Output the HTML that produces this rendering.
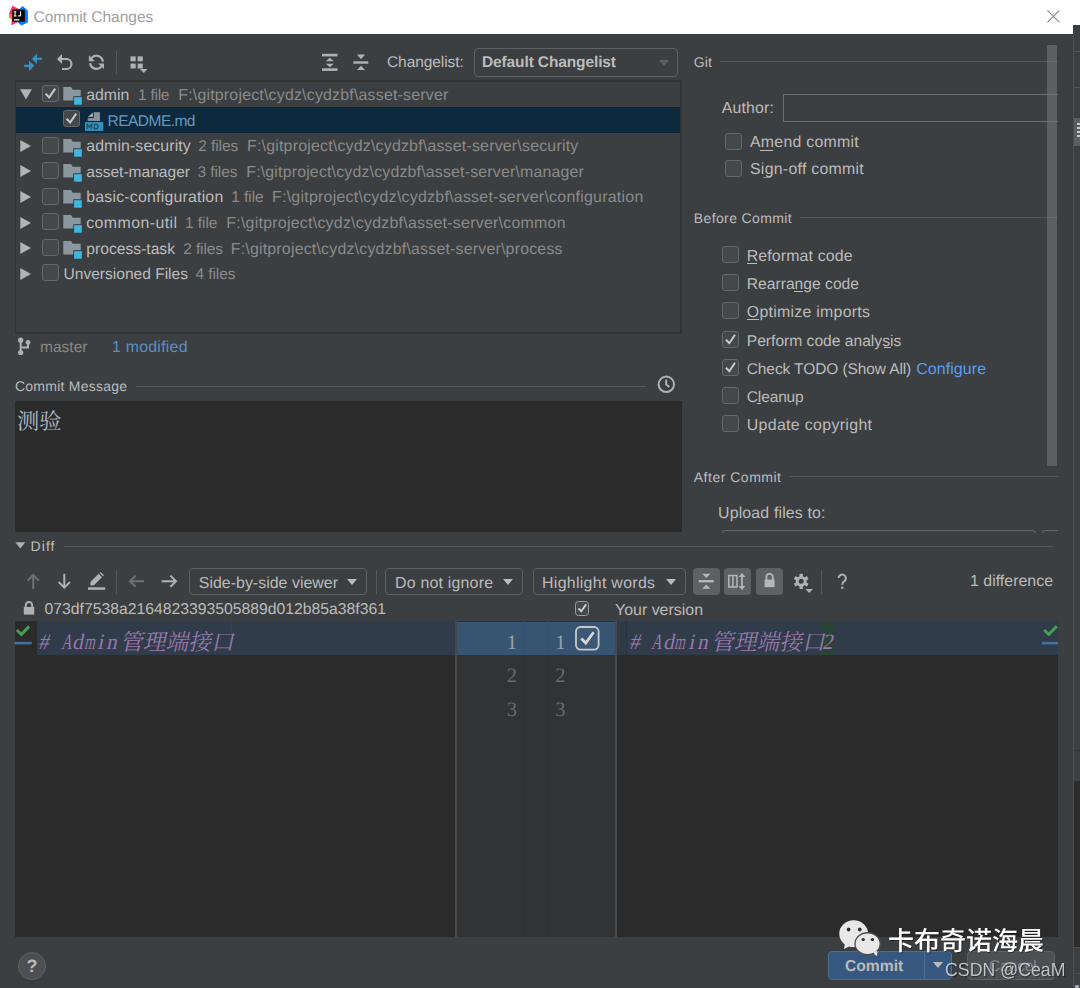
<!DOCTYPE html>
<html lang="en">
<head>
<meta charset="utf-8">
<title>Commit Changes</title>
<style>
*{box-sizing:border-box;margin:0;padding:0}
html,body{width:1080px;height:988px;overflow:hidden;background:#3c3f41}
body{position:relative;font-family:"Liberation Sans",sans-serif;font-size:15.5px;color:#bbb;text-rendering:geometricPrecision}
.abs,.t,.box,.cb,.ln,.combo,.btn{position:absolute}
.t{white-space:pre;line-height:normal}
svg{overflow:visible;display:block}
.ln{background:#535557;height:1px}
.vl{position:absolute;width:1px;background:#555759}
.cb{width:17px;height:17px;border:1px solid #65686a;border-radius:3px;background:#43494a}
.cb svg{position:absolute;left:-1px;top:-1px}
.combo{border:1px solid #5f6264;border-radius:4px;background:#3c3f41}
.tri{position:absolute;width:0;height:0;border-left:5px solid transparent;border-right:5px solid transparent;border-top:6px solid #bbb}
.tog{position:absolute;width:26.5px;height:26.5px;border-radius:4px;background:#5c6164;top:568px}
.u{position:absolute;height:1.3px;background:#bbb}
</style>
</head>
<body>
<!-- ===== window title bar ===== -->
<div class="abs" id="titlebar" style="left:0;top:0;width:1073px;height:34px;background:#fff"></div>
<div class="abs" style="left:1073px;top:0;width:7px;height:25px;background:#fff"></div>
<div class="abs" style="left:1073px;top:25px;width:7px;height:963px;background:#3c3f41"></div>
<div class="abs" style="left:1073px;top:34px;width:1px;height:954px;background:#4b4d4f"></div>
<div class="abs" style="left:1074px;top:51px;width:6px;height:1px;background:#555"></div>
<div class="abs" style="left:1074px;top:87px;width:6px;height:1px;background:#555"></div>
<div class="abs" style="left:1074px;top:118px;width:6px;height:28px;background:#5b5e60"></div>
<div class="abs" style="left:1077px;top:123px;width:3px;height:2px;background:#c8c8c8"></div>
<div class="abs" style="left:1077px;top:127px;width:3px;height:2px;background:#c8c8c8"></div>
<div class="abs" style="left:1077px;top:131px;width:3px;height:2px;background:#c8c8c8"></div>
<div class="abs" style="left:1077px;top:135px;width:3px;height:2px;background:#c8c8c8"></div>
<div class="abs" style="left:1074px;top:750px;width:6px;height:1px;background:#333"></div>
<div class="abs" style="left:1074px;top:781px;width:6px;height:166px;background:#2b2b2b"></div>
<div class="abs" style="left:1074px;top:947px;width:6px;height:1px;background:#4d4f51"></div>
<div class="abs" style="left:1074px;top:973px;width:6px;height:1px;background:#4a4c4e"></div>
<div class="abs" style="left:1075px;top:985px;width:4px;height:3px;background:#9fa6b8"></div>
<!-- IntelliJ logo -->
<svg class="abs" id="logo" style="left:8px;top:5px" width="21" height="21" viewBox="0 0 21 21">
  <polygon points="4.3,0.8 11.5,4.2 9.8,17.200 3.200,20.300 4,13 1,8.600" fill="#f93263"/>
  <polygon points="0.900,9.500 4.400,9.600 4.400,14.600 1.100,12.900" fill="#fc801d"/>
  <polygon points="14.500,0.900 19.900,5.400 19.900,17.500 13.250,20.500 9.800,17.200 11,4.300" fill="#087cfa"/>
  <rect x="4.300" y="4.600" width="12.500" height="12.100" fill="#000"/>
  <rect x="6" y="14.200" width="5.400" height="1.300" fill="#fff"/>
  <path d="M5.700 6.300h2.700v1H7.600v3.200h.8v1H5.700v-1h.8V7.300h-.8z" fill="#fff"/>
  <path d="M11.900 6.300h1.200v3.600c0 1.100-.6 1.700-1.600 1.700-.7 0-1.200-.3-1.500-.7l.7-.8c.2.300.4.400.7.400.4 0 .5-.2.500-.7z" fill="#fff"/>
</svg>
<!-- close X -->
<svg class="abs" style="left:1046.5px;top:9.5px" width="13" height="13" viewBox="0 0 13 13"><path d="M0.4 0.4L12.4 12.400M12.400 0.400L0.400 12.400" stroke="#8a8a8a" stroke-width="1.150" fill="none"/></svg>

<!-- ===== top toolbar ===== -->
<svg class="abs" id="ic-diff" style="left:23px;top:52px" width="20" height="20" viewBox="0 0 20 20" fill="#3592c4">
  <path d="M9 6.75L14 1.6V5.7H19V7.8H14V11.9z"/>
  <path d="M11.5 13.8L6 8.8V12.7H1.2V14.9H6V18.9z"/>
</svg>
<svg class="abs" id="ic-undo" style="left:56px;top:53px" width="18" height="18" viewBox="0 0 18 18">
  <path d="M1 6L6 1V11z" fill="#afb1b3"/>
  <path d="M5.5 6H10.5A5 5 0 0 1 10.5 16H6" fill="none" stroke="#afb1b3" stroke-width="2.1"/>
</svg>
<svg class="abs" id="ic-refresh" style="left:88px;top:54px" width="17" height="17" viewBox="0 0 17 17">
  <path d="M3.5 4.2A6.3 6.3 0 0 1 14.8 7.6" fill="none" stroke="#afb1b3" stroke-width="2.2"/>
  <path d="M2.2 9.2A6.3 6.3 0 0 0 13.5 12.4" fill="none" stroke="#afb1b3" stroke-width="2.2"/>
  <path d="M0.9 1.2V7.3H6.8z" fill="#afb1b3"/>
  <path d="M16 9.5V15.1L10.1 9.5z" fill="#afb1b3"/>
</svg>
<div class="vl" style="left:116px;top:51px;height:23px"></div>
<svg class="abs" id="ic-group" style="left:130px;top:56px" width="18" height="18" viewBox="0 0 18 18" fill="#afb1b3">
  <rect x="0.5" y="0.4" width="5.2" height="4.9"/><rect x="7.6" y="0.4" width="5.2" height="4.9"/>
  <rect x="0.5" y="7.6" width="5.2" height="4.9"/><rect x="7.6" y="7.6" width="5.2" height="4.9"/>
  <path d="M10 13H17.5L13.75 17z"/>
</svg>
<svg class="abs" id="ic-expand" style="left:322px;top:53px" width="16" height="19" viewBox="0 0 16 19" fill="#afb1b3">
  <rect x="0" y="0.8" width="15.5" height="2.6"/><rect x="0" y="15.3" width="15.5" height="2.6"/>
  <path d="M3.8 8.3H11.8L7.8 4.8z"/><path d="M3.8 10.8H11.8L7.8 14.3z"/>
</svg>
<svg class="abs" id="ic-collapse" style="left:353px;top:54px" width="16" height="17" viewBox="0 0 16 17" fill="#afb1b3">
  <rect x="0.3" y="7.3" width="15" height="2.4"/>
  <path d="M4 0.6H12L8 5.2z"/><path d="M4 16H12L8 11.8z"/>
</svg>
<div class="combo" style="left:474px;top:48px;width:204px;height:29px"></div>
<div class="tri" style="left:659px;top:60px;border-top-color:#5c5f61"></div>

<!-- ===== changes tree ===== -->
<div class="box" id="tree" style="left:15px;top:80px;width:667px;height:254px;border:1px solid #323232;border-top-width:2px;border-right-width:2px;border-bottom-width:2px"></div>
<div class="box" id="selrow" style="left:16px;top:107px;width:664px;height:25.5px;background:#0d293e"></div>
<svg class="abs" style="left:19.5px;top:89.20px" width="13" height="11" viewBox="0 0 13 11"><path d="M0.1 0.2H11.9L6 10.4z" fill="#b1b3b5"/></svg>
<div class="cb" style="left:42px;top:85.00px"><svg width="17" height="17" viewBox="0 0 17 17"><path d="M3.6 8.8L7.2 12.4L13.2 3.6" fill="none" stroke="#c8c8c8" stroke-width="2"/></svg></div>
<svg class="abs" style="left:63.20px;top:87.20px" width="20" height="18" viewBox="0 0 20 18"><path d="M0.3 0H8.2L9.6 2.8H17.7V13.4H0.3z" fill="#8a979f"/><rect x="10.2" y="9.2" width="9.6" height="9" fill="#3c3f41"/><rect x="11.1" y="10.2" width="7.7" height="7.5" fill="#40b6e0"/></svg>
<div class="cb" style="left:63px;top:110.45px"><svg width="17" height="17" viewBox="0 0 17 17"><path d="M3.6 8.8L7.2 12.4L13.2 3.6" fill="none" stroke="#c8c8c8" stroke-width="2"/></svg></div>
<svg class="abs" style="left:85px;top:112px" width="19" height="20" viewBox="0 0 19 20"><rect x="8.8" y="0.2" width="6.1" height="8.7" fill="#87939a"/><rect x="2.7" y="6.1" width="12.2" height="2.8" fill="#87939a"/><path d="M2.7 4.9H8V0.6z" fill="#9aa7b0"/><rect x="0" y="10" width="18.3" height="8.9" fill="#3490b8"/><path d="M2.1 17V12.3L4.4 15.2L6.700 12.300V17M9.400 12.300V16.900H10.800A2.300 2.300 0 0 0 10.800 12.300z" fill="none" stroke="#1e4d65" stroke-width="1.250"/></svg>
<svg class="abs" style="left:20px;top:139.90px" width="12" height="13" viewBox="0 0 12 13"><path d="M0.3 0.1V11.9L11 6z" fill="#b1b3b5"/></svg>
<div class="cb" style="left:42px;top:136.60px"></div>
<svg class="abs" style="left:63.20px;top:138.80px" width="20" height="18" viewBox="0 0 20 18"><path d="M0.3 0H8.2L9.6 2.8H17.7V13.4H0.3z" fill="#8a979f"/><rect x="10.2" y="9.2" width="9.6" height="9" fill="#3c3f41"/><rect x="11.1" y="10.2" width="7.7" height="7.5" fill="#40b6e0"/></svg>
<svg class="abs" style="left:20px;top:165.45px" width="12" height="13" viewBox="0 0 12 13"><path d="M0.3 0.1V11.9L11 6z" fill="#b1b3b5"/></svg>
<div class="cb" style="left:42px;top:162.15px"></div>
<svg class="abs" style="left:63.20px;top:164.35px" width="20" height="18" viewBox="0 0 20 18"><path d="M0.3 0H8.2L9.6 2.8H17.7V13.4H0.3z" fill="#8a979f"/><rect x="10.2" y="9.2" width="9.6" height="9" fill="#3c3f41"/><rect x="11.1" y="10.2" width="7.7" height="7.5" fill="#40b6e0"/></svg>
<svg class="abs" style="left:20px;top:191.00px" width="12" height="13" viewBox="0 0 12 13"><path d="M0.3 0.1V11.9L11 6z" fill="#b1b3b5"/></svg>
<div class="cb" style="left:42px;top:187.70px"></div>
<svg class="abs" style="left:63.20px;top:189.90px" width="20" height="18" viewBox="0 0 20 18"><path d="M0.3 0H8.2L9.6 2.8H17.7V13.4H0.3z" fill="#8a979f"/><rect x="10.2" y="9.2" width="9.6" height="9" fill="#3c3f41"/><rect x="11.1" y="10.2" width="7.7" height="7.5" fill="#40b6e0"/></svg>
<svg class="abs" style="left:20px;top:216.55px" width="12" height="13" viewBox="0 0 12 13"><path d="M0.3 0.1V11.9L11 6z" fill="#b1b3b5"/></svg>
<div class="cb" style="left:42px;top:213.25px"></div>
<svg class="abs" style="left:63.20px;top:215.45px" width="20" height="18" viewBox="0 0 20 18"><path d="M0.3 0H8.2L9.6 2.8H17.7V13.4H0.3z" fill="#8a979f"/><rect x="10.2" y="9.2" width="9.6" height="9" fill="#3c3f41"/><rect x="11.1" y="10.2" width="7.7" height="7.5" fill="#40b6e0"/></svg>
<svg class="abs" style="left:20px;top:242.10px" width="12" height="13" viewBox="0 0 12 13"><path d="M0.3 0.1V11.9L11 6z" fill="#b1b3b5"/></svg>
<div class="cb" style="left:42px;top:238.80px"></div>
<svg class="abs" style="left:63.20px;top:241.00px" width="20" height="18" viewBox="0 0 20 18"><path d="M0.3 0H8.2L9.6 2.8H17.7V13.4H0.3z" fill="#8a979f"/><rect x="10.2" y="9.2" width="9.6" height="9" fill="#3c3f41"/><rect x="11.1" y="10.2" width="7.7" height="7.5" fill="#40b6e0"/></svg>
<svg class="abs" style="left:20px;top:267.65px" width="12" height="13" viewBox="0 0 12 13"><path d="M0.3 0.1V11.9L11 6z" fill="#b1b3b5"/></svg>
<div class="cb" style="left:42px;top:264.35px"></div>

<!-- status -->
<svg class="abs" id="ic-branch" style="left:17px;top:337px" width="15" height="19" viewBox="0 0 15 19">
  <path d="M3.7 3.2V15.5M3.7 10.5H11V5.5" fill="none" stroke="#afb1b3" stroke-width="2"/>
  <circle cx="3.7" cy="3.2" r="2.6" fill="#afb1b3"/><circle cx="3.7" cy="15.5" r="2.6" fill="#afb1b3"/><circle cx="11" cy="5.5" r="2.4" fill="#afb1b3"/>
</svg>

<!-- commit message -->
<div class="ln" style="left:136px;top:386px;width:510px"></div>
<svg class="abs" id="ic-clock" style="left:657px;top:375px" width="19" height="19" viewBox="0 0 19 19"><circle cx="9.3" cy="9.3" r="7.7" fill="none" stroke="#afb1b3" stroke-width="2"/><path d="M9.2 4.5V9.6L12.4 12" fill="none" stroke="#afb1b3" stroke-width="2"/></svg>
<div class="box" id="msg" style="left:15px;top:401px;width:667px;height:131px;background:#2b2b2b"></div>
<svg class="abs " style="left:10.60px;top:401.90px;" width="56.6" height="42.1" viewBox="-6 -27.5 56.6 42.1" fill="#a9b7c6"><text x="0" y="0" font-size="22.3" font-family="'Liberation Serif','Noto Serif CJK SC',serif" fill="#a9b7c6">测验</text></svg>

<!-- ===== right options panel ===== -->
<div class="ln" style="left:720px;top:61px;width:338px"></div>
<div class="box" id="author" style="left:783px;top:94px;width:290px;height:28px;border:1px solid #6c6e70;border-right:none;background:#3c3f41"></div>
<div class="cb" style="left:725px;top:133px"></div>
<div class="cb" style="left:725px;top:160px"></div>
<div class="u" style="left:760px;top:149.5px;width:13px"></div>
<div class="u" style="left:763px;top:177px;width:8px;background:#888"></div>
<div class="ln" style="left:800px;top:217px;width:258px"></div>
<div class="cb" style="left:722px;top:246.20px"></div>
<div class="cb" style="left:722px;top:274.32px"></div>
<div class="cb" style="left:722px;top:302.44px"></div>
<div class="cb" style="left:722px;top:330.56px"><svg width="17" height="17" viewBox="0 0 17 17"><path d="M4 8.7L7.3 12.2L13 3.8" fill="none" stroke="#c8c8c8" stroke-width="2"/></svg></div>
<div class="cb" style="left:722px;top:358.68px"><svg width="17" height="17" viewBox="0 0 17 17"><path d="M4 8.7L7.3 12.2L13 3.8" fill="none" stroke="#c8c8c8" stroke-width="2"/></svg></div>
<div class="cb" style="left:722px;top:386.80px"></div>
<div class="cb" style="left:722px;top:414.92px"></div>
<div class="u" style="left:747px;top:262.6px;width:10px"></div>
<div class="u" style="left:794px;top:290.7px;width:9px"></div>
<div class="u" style="left:747px;top:318.8px;width:12px"></div>
<div class="u" style="left:884px;top:346.9px;width:7px"></div>
<div class="u" style="left:757px;top:403.1px;width:4px"></div>
<div class="ln" style="left:789px;top:476px;width:269px"></div>
<div class="box" style="left:722px;top:530px;width:314px;height:10px;border:1px solid #646667;border-bottom:none;border-radius:4px 4px 0 0"></div>
<div class="box" style="left:1042px;top:530px;width:24px;height:10px;border:1px solid #646667;border-bottom:none;border-radius:4px 4px 0 0"></div>
<div class="box" style="left:690px;top:533px;width:383px;height:10px;background:#3c3f41"></div>
<div class="box" style="left:1058px;top:40px;width:15px;height:500px;background:#3c3f41"></div>
<div class="box" id="scroll" style="left:1047px;top:45px;width:10px;height:421px;background:rgba(120,120,122,0.55)"></div>

<!-- ===== diff section ===== -->
<svg class="abs" style="left:15px;top:542px" width="11" height="8" viewBox="0 0 11 8"><path d="M0.3 0.3H10.3L5.3 6.6z" fill="#afb1b3"/></svg>
<div class="ln" style="left:64px;top:546px;width:989px"></div>
<svg class="abs" id="ic-up" style="left:26px;top:573px" width="14" height="17" viewBox="0 0 14 17"><path d="M7.2 16V2M1.6 7.6L7.2 2L12.8 7.6" fill="none" stroke="#6e7072" stroke-width="2"/></svg>
<svg class="abs" id="ic-down" style="left:57px;top:573px" width="14" height="17" viewBox="0 0 14 17"><path d="M7.3 0.8V14.6M1.7 9L7.3 14.6L12.9 9" fill="none" stroke="#afb1b3" stroke-width="2"/></svg>
<svg class="abs" id="ic-pencil" style="left:88px;top:572px" width="18" height="19" viewBox="0 0 18 19" fill="#afb1b3">
  <rect x="0" y="15.3" width="17.2" height="2.5"/>
  <path d="M2.2 13.4L2.6 9.8L10.6 1.8L14 5.2L6 13.2z"/><path d="M11.6 0.9L12.6 0 16 3.3 15 4.3z"/>
</svg>
<div class="vl" style="left:116px;top:570px;height:24px"></div>
<svg class="abs" id="ic-left" style="left:128px;top:574px" width="17" height="14" viewBox="0 0 17 14"><path d="M16 7.2H2M7.6 1.6L2 7.2L7.6 12.8" fill="none" stroke="#6e7072" stroke-width="2"/></svg>
<svg class="abs" id="ic-right" style="left:161px;top:574px" width="17" height="14" viewBox="0 0 17 14"><path d="M0.6 7.2H15M9.4 1.6L15 7.2L9.4 12.8" fill="none" stroke="#afb1b3" stroke-width="2"/></svg>
<div class="combo" style="left:189px;top:568px;width:178px;height:27px"></div><div class="tri" style="left:347px;top:579px"></div>
<div class="vl" style="left:376px;top:570px;height:24px"></div>
<div class="combo" style="left:385px;top:568px;width:138px;height:27px"></div><div class="tri" style="left:503px;top:579px"></div>
<div class="combo" style="left:533px;top:568px;width:152.5px;height:27px"></div><div class="tri" style="left:666px;top:579px"></div>
<div class="tog" style="left:693px"><svg width="27" height="27" viewBox="0 0 27 27" fill="#b4b6b8"><rect x="5.7" y="12" width="15" height="2.4"/><path d="M9.2 5.7H17.4L13.3 10z"/><path d="M9.2 20.8H17.4L13.3 16.6z"/></svg></div>
<div class="tog" style="left:724.2px"><svg width="27" height="27" viewBox="0 0 27 27"><path d="M4.8 7.6H13V19H4.8zM8.9 7.6V19" fill="none" stroke="#b4b6b8" stroke-width="1.5"/><path d="M18 7V20" stroke="#b4b6b8" stroke-width="1.8"/><path d="M14.6 9L18 5L21.4 9zM14.6 18L18 22L21.4 18z" fill="#b4b6b8"/></svg></div>
<div class="tog" style="left:756px"><svg width="27" height="27" viewBox="0 0 27 27"><rect x="8.6" y="11.6" width="10" height="7.6" fill="#b4b6b8"/><path d="M10.4 12V9A3.2 3.2 0 0 1 16.8 9V12" fill="none" stroke="#b4b6b8" stroke-width="1.8"/></svg></div>
<svg class="abs" id="ic-gear" style="left:793px;top:573px" width="21" height="21" viewBox="0 0 21 21">
  <g transform="translate(8.2 8.3)" fill="#afb1b3">
    <circle r="5.4"/>
    <rect x="-1.7" y="-7.6" width="3.4" height="15.2" rx="0.5"/>
    <rect x="-1.7" y="-7.6" width="3.4" height="15.2" rx="0.5" transform="rotate(60)"/>
    <rect x="-1.7" y="-7.6" width="3.4" height="15.2" rx="0.5" transform="rotate(120)"/>
    <circle r="2.5" fill="#3c3f41"/>
  </g>
  <path d="M12.4 16H20L16.2 20z" fill="#afb1b3"/>
</svg>
<div class="vl" style="left:821px;top:570px;height:24px"></div>
<svg class="abs" id="ic-help" style="left:836px;top:573px" width="13" height="17" viewBox="0 0 13 17"><path d="M2.5 5.100A3.700 3.700 0 1 1 8.700 7.900Q6.200 9.500 6.200 11.800" fill="none" stroke="#afb1b3" stroke-width="2"/><circle cx="6.200" cy="14.700" r="1.300" fill="#afb1b3"/></svg>

<!-- file header -->
<svg class="abs" id="ic-lock" style="left:23px;top:601px" width="12" height="14" viewBox="0 0 12 14"><rect x="0.8" y="6" width="10.4" height="7.6" fill="#afb1b3"/><path d="M2.8 6.4V4.2A3.2 3.2 0 0 1 9.2 4.2V6.4" fill="none" stroke="#afb1b3" stroke-width="1.9"/></svg>
<div class="box" style="left:574.5px;top:601px;width:14.6px;height:14.6px;border:1.4px solid #9d9fa1;border-radius:3.5px;background:#43494a"><svg class="abs" style="left:-1px;top:-1px" width="14.5" height="14.5" viewBox="0 0 14.5 14.5"><path d="M3.4 7.4L6.2 10.300L11.200 3.300" fill="none" stroke="#cdcdcd" stroke-width="2"/></svg></div>

<!-- editors -->
<div class="box" id="edL" style="left:15px;top:621px;width:442px;height:316px;background:#2b2b2b"></div>
<div class="box" id="gut" style="left:457px;top:621px;width:159px;height:316px;background:#313335"></div>
<div class="box" id="edR" style="left:616px;top:621px;width:442px;height:316px;background:#2b2b2b"></div>
<div class="box" style="left:37px;top:621px;width:420px;height:34.3px;background:#303c4a"></div>
<div class="box" style="left:457px;top:621.6px;width:159px;height:33.7px;background:#375472"></div>
<div class="box" style="left:616px;top:621px;width:442px;height:34.3px;background:#303c4a"></div>
<div class="box" style="left:616px;top:621px;width:10px;height:34.3px;background:#303b47"></div>
<div class="box" style="left:626px;top:621px;width:1px;height:34.3px;background:#2a323c"></div>
<div class="box" style="left:822px;top:621px;width:11.4px;height:34.3px;background:#294436"></div>
<div class="box" style="left:231px;top:621px;width:1px;height:34.3px;background:#2d4a36"></div>
<div class="vl" style="left:455px;top:621px;width:2px;height:316px;background:#47494b"></div>
<div class="vl" style="left:524px;top:655.5px;height:281.5px;background:#2d2f31"></div>
<div class="vl" style="left:548px;top:655.5px;height:281.5px;background:#2d2f31"></div>
<div class="vl" style="left:524px;top:621px;height:34.3px;background:#335070"></div>
<div class="vl" style="left:548px;top:621px;height:34.3px;background:#335070"></div>
<div class="vl" style="left:615px;top:621px;width:2px;height:316px;background:#47494b"></div>
<svg class="abs" style="left:15px;top:624px" width="18" height="22" viewBox="0 0 18 22"><path d="M1.8 6L6.4 10.4L14.2 2.4" fill="none" stroke="#499c54" stroke-width="3"/><rect x="-0.4" y="17.8" width="17.2" height="2.6" fill="#44709c"/></svg>
<svg class="abs" style="left:1042px;top:624px" width="18" height="22" viewBox="0 0 18 22"><path d="M2.2 6L6.8 10.4L14.8 2.2" fill="none" stroke="#499c54" stroke-width="3"/><rect x="0" y="17.8" width="16" height="2.6" fill="#44709c"/></svg>
<svg class="abs" style="left:575px;top:625.5px" width="25" height="25" viewBox="0 0 25 25"><rect x="1" y="1" width="22.6" height="22.6" rx="4.5" fill="#3b5876" stroke="#c6c9cc" stroke-width="1.8"/><path d="M6.2 12.4L10.8 17L18.6 6.2" fill="none" stroke="#d6d6d6" stroke-width="2.8"/></svg>
<span class="t" style="left:38.09px;top:628.70px;font-family:'Liberation Serif';font-size:22px;color:#9876aa;transform:matrix(0.964,0,-0.22,1,0,0);transform-origin:0 20px">#</span><span class="t" style="left:60.85px;top:628.70px;font-family:'Liberation Serif';font-size:22px;color:#9876aa;transform:matrix(0.667,0,-0.22,1,0,0);transform-origin:0 20px">A</span><span class="t" style="left:72.23px;top:628.70px;font-family:'Liberation Serif';font-size:22px;color:#9876aa;transform:matrix(0.964,0,-0.22,1,0,0);transform-origin:0 20px">d</span><span class="t" style="left:83.61px;top:628.70px;font-family:'Liberation Serif';font-size:22px;color:#9876aa;transform:matrix(0.619,0,-0.22,1,0,0);transform-origin:0 20px">m</span><span class="t" style="left:97.23px;top:628.70px;font-family:'Liberation Serif';font-size:22px;color:#9876aa;transform:matrix(1.000,0,-0.22,1,0,0);transform-origin:0 20px">i</span><span class="t" style="left:106.37px;top:628.70px;font-family:'Liberation Serif';font-size:22px;color:#9876aa;transform:matrix(0.964,0,-0.22,1,0,0);transform-origin:0 20px">n</span>
<span class="t" style="left:628.59px;top:628.70px;font-family:'Liberation Serif';font-size:22px;color:#9876aa;transform:matrix(0.964,0,-0.22,1,0,0);transform-origin:0 20px">#</span><span class="t" style="left:651.35px;top:628.70px;font-family:'Liberation Serif';font-size:22px;color:#9876aa;transform:matrix(0.667,0,-0.22,1,0,0);transform-origin:0 20px">A</span><span class="t" style="left:662.73px;top:628.70px;font-family:'Liberation Serif';font-size:22px;color:#9876aa;transform:matrix(0.964,0,-0.22,1,0,0);transform-origin:0 20px">d</span><span class="t" style="left:674.11px;top:628.70px;font-family:'Liberation Serif';font-size:22px;color:#9876aa;transform:matrix(0.619,0,-0.22,1,0,0);transform-origin:0 20px">m</span><span class="t" style="left:687.73px;top:628.70px;font-family:'Liberation Serif';font-size:22px;color:#9876aa;transform:matrix(1.000,0,-0.22,1,0,0);transform-origin:0 20px">i</span><span class="t" style="left:696.87px;top:628.70px;font-family:'Liberation Serif';font-size:22px;color:#9876aa;transform:matrix(0.964,0,-0.22,1,0,0);transform-origin:0 20px">n</span>
<span class="t" style="left:822.05px;top:628.70px;font-family:'Liberation Serif';font-size:22px;color:#9876aa;transform:matrix(0.964,0,-0.22,1,0,0);transform-origin:0 20px">2</span>
<span class="t" style="left:505.00px;width:12px;text-align:right;top:632px;font-family:'Liberation Serif';font-size:20.5px;color:#98a2ad">1</span>
<span class="t" style="left:553.50px;width:12px;text-align:right;top:632px;font-family:'Liberation Serif';font-size:20.5px;color:#98a2ad">1</span>
<span class="t" style="left:505.00px;width:12px;text-align:right;top:665px;font-family:'Liberation Serif';font-size:20.5px;color:#686b6d">2</span>
<span class="t" style="left:553.50px;width:12px;text-align:right;top:665px;font-family:'Liberation Serif';font-size:20.5px;color:#686b6d">2</span>
<span class="t" style="left:505.00px;width:12px;text-align:right;top:699px;font-family:'Liberation Serif';font-size:20.5px;color:#686b6d">3</span>
<span class="t" style="left:553.50px;width:12px;text-align:right;top:699px;font-family:'Liberation Serif';font-size:20.5px;color:#686b6d">3</span>
<svg class="abs " style="left:114.26px;top:622.60px;" width="125.8" height="40.8" viewBox="-6 -26.6 125.8 40.8" fill="#9876aa"><text x="0" y="0" font-size="22.76" font-family="'Liberation Serif','Noto Serif CJK SC',serif" fill="#9876aa" transform="matrix(1,0,-0.22,1,0,0)">管理端接口</text></svg>
<svg class="abs " style="left:704.76px;top:622.60px;" width="125.8" height="40.8" viewBox="-6 -26.6 125.8 40.8" fill="#9876aa"><text x="0" y="0" font-size="22.76" font-family="'Liberation Serif','Noto Serif CJK SC',serif" fill="#9876aa" transform="matrix(1,0,-0.22,1,0,0)">管理端接口</text></svg>

<!-- ===== bottom bar ===== -->
<div class="box" id="help" style="left:17.5px;top:952px;width:28px;height:28px;border-radius:14px;background:#4c5052;border:1px solid #5e6162"></div>
<span class="t" style="left:26.5px;top:955.5px;font-size:18px;font-weight:700;color:#bbb">?</span>
<div class="box" id="commit" style="left:828px;top:951px;width:124px;height:29px;border-radius:4px;background:#365880;border:1px solid #4c708c"></div>
<div class="vl" style="left:924px;top:952px;height:27px;background:#4c708c"></div>
<div class="tri" style="left:933px;top:962px;border-left-width:5.5px;border-right-width:5.5px;border-top-color:#bbb"></div>
<div class="box" id="cancel" style="left:967px;top:951px;width:88px;height:29px;border-radius:4px;background:#4c5052;border:1px solid #5e6162"></div>
<span class="t" style="left:33.50px;top:9px;font-size:15.51px;color:#a0a0a0;letter-spacing:0.004px;">Commit Changes</span>
<span class="t" style="left:86.25px;top:87px;font-size:15.79px;color:#bbbbbb;letter-spacing:0.004px;">admin</span>
<span class="t" style="left:138.00px;top:87px;font-size:15.5px;color:#8a8a8a;letter-spacing:-0.250px;">1 file</span>
<span class="t" style="left:178.25px;top:87px;font-size:15.9px;color:#8a8a8a;letter-spacing:0.209px;">F:\gitproject\cydz\cydzbf\asset-server</span>
<span class="t" style="left:86.25px;top:138px;font-size:15.9px;color:#bbbbbb;letter-spacing:0.090px;">admin-security</span>
<span class="t" style="left:198.25px;top:138px;font-size:15.5px;color:#8a8a8a;letter-spacing:-0.083px;">2 files</span>
<span class="t" style="left:247.00px;top:138px;font-size:15.9px;color:#8a8a8a;letter-spacing:0.213px;">F:\gitproject\cydz\cydzbf\asset-server\security</span>
<span class="t" style="left:86.25px;top:164px;font-size:15.55px;color:#bbbbbb;letter-spacing:0.004px;">asset-manager</span>
<span class="t" style="left:197.50px;top:164px;font-size:15.5px;color:#8a8a8a;letter-spacing:-0.083px;">3 files</span>
<span class="t" style="left:246.25px;top:164px;font-size:15.9px;color:#8a8a8a;letter-spacing:0.180px;">F:\gitproject\cydz\cydzbf\asset-server\manager</span>
<span class="t" style="left:86.25px;top:189px;font-size:15.9px;color:#bbbbbb;letter-spacing:0.201px;">basic-configuration</span>
<span class="t" style="left:231.25px;top:189px;font-size:15.5px;color:#8a8a8a;letter-spacing:-0.050px;">1 file</span>
<span class="t" style="left:272.00px;top:189px;font-size:15.9px;color:#8a8a8a;letter-spacing:0.266px;">F:\gitproject\cydz\cydzbf\asset-server\configuration</span>
<span class="t" style="left:86.25px;top:215px;font-size:15.9px;color:#bbbbbb;letter-spacing:0.420px;">common-util</span>
<span class="t" style="left:185.00px;top:215px;font-size:15.5px;color:#8a8a8a;letter-spacing:-0.050px;">1 file</span>
<span class="t" style="left:226.25px;top:215px;font-size:15.9px;color:#8a8a8a;letter-spacing:0.264px;">F:\gitproject\cydz\cydzbf\asset-server\common</span>
<span class="t" style="left:86.25px;top:241px;font-size:15.65px;color:#bbbbbb;letter-spacing:0.007px;">process-task</span>
<span class="t" style="left:183.25px;top:241px;font-size:15.5px;color:#8a8a8a;letter-spacing:-0.125px;">2 files</span>
<span class="t" style="left:230.75px;top:241px;font-size:15.9px;color:#8a8a8a;letter-spacing:0.209px;">F:\gitproject\cydz\cydzbf\asset-server\process</span>
<span class="t" style="left:107.50px;top:113px;font-size:15.5px;color:#6897bb;letter-spacing:-0.520px;">README.md</span>
<span class="t" style="left:63.50px;top:266px;font-size:15.55px;color:#bbbbbb;letter-spacing:0.004px;">Unversioned Files</span>
<span class="t" style="left:195.50px;top:266px;font-size:15.5px;color:#8a8a8a;letter-spacing:-0.083px;">4 files</span>
<span class="t" style="left:387.00px;top:54px;font-size:15.5px;color:#bbbbbb;letter-spacing:-0.080px;">Changelist:</span>
<span class="t" style="left:482.00px;top:54px;font-size:15.5px;color:#bbbbbb;letter-spacing:-0.122px;font-weight:700;">Default Changelist</span>
<span class="t" style="left:40.00px;top:339px;font-size:15.54px;color:#878787;letter-spacing:0.006px;">master</span>
<span class="t" style="left:112.00px;top:339px;font-size:15.9px;color:#5a8fc4;letter-spacing:0.241px;">1 modified</span>
<span class="t" style="left:15.00px;top:378px;font-size:14.0px;color:#bbbbbb;letter-spacing:0.237px;">Commit Message</span>
<span class="t" style="left:693.75px;top:54px;font-size:14.0px;color:#bbbbbb;letter-spacing:0.180px;">Git</span>
<span class="t" style="left:721.75px;top:100px;font-size:15.9px;color:#bbbbbb;letter-spacing:0.169px;">Author:</span>
<span class="t" style="left:750.00px;top:134px;font-size:15.9px;color:#bbbbbb;letter-spacing:0.253px;">Amend commit</span>
<span class="t" style="left:750.00px;top:161px;font-size:15.9px;color:#bbbbbb;letter-spacing:0.261px;">Sign-off commit</span>
<span class="t" style="left:693.75px;top:210px;font-size:14.0px;color:#bbbbbb;letter-spacing:0.387px;">Before Commit</span>
<span class="t" style="left:746.75px;top:248px;font-size:15.9px;color:#bbbbbb;letter-spacing:0.126px;">Reformat code</span>
<span class="t" style="left:746.75px;top:276px;font-size:15.65px;color:#bbbbbb;letter-spacing:0.006px;">Rearrange code</span>
<span class="t" style="left:746.75px;top:304px;font-size:15.9px;color:#bbbbbb;letter-spacing:0.270px;">Optimize imports</span>
<span class="t" style="left:746.75px;top:333px;font-size:15.62px;color:#bbbbbb;letter-spacing:0.003px;">Perform code analysis</span>
<span class="t" style="left:746.75px;top:361px;font-size:15.5px;color:#bbbbbb;letter-spacing:-0.102px;">Check TODO (Show All)</span>
<span class="t" style="left:746.75px;top:389px;font-size:15.5px;color:#bbbbbb;letter-spacing:-0.125px;">Cleanup</span>
<span class="t" style="left:746.75px;top:417px;font-size:15.9px;color:#bbbbbb;letter-spacing:0.341px;">Update copyright</span>
<span class="t" style="left:916.25px;top:361px;font-size:15.9px;color:#589df6;letter-spacing:0.105px;">Configure</span>
<span class="t" style="left:693.75px;top:469px;font-size:14.0px;color:#bbbbbb;letter-spacing:0.506px;">After Commit</span>
<span class="t" style="left:718.00px;top:505px;font-size:15.9px;color:#bbbbbb;letter-spacing:0.158px;">Upload files to:</span>
<span class="t" style="left:30.50px;top:538px;font-size:14.0px;color:#bbbbbb;letter-spacing:1.083px;">Diff</span>
<span class="t" style="left:198.75px;top:575px;font-size:15.9px;color:#bbbbbb;letter-spacing:0.033px;">Side-by-side viewer</span>
<span class="t" style="left:395.00px;top:575px;font-size:15.9px;color:#bbbbbb;letter-spacing:0.216px;">Do not ignore</span>
<span class="t" style="left:542.00px;top:575px;font-size:15.9px;color:#bbbbbb;letter-spacing:0.311px;">Highlight words</span>
<span class="t" style="left:970.00px;top:573px;font-size:15.9px;color:#bbbbbb;letter-spacing:0.021px;">1 difference</span>
<span class="t" style="left:44.50px;top:601px;font-size:15.74px;color:#bbbbbb;letter-spacing:0.006px;">073df7538a2164823393505889d012b85a38f361</span>
<span class="t" style="left:615.00px;top:602px;font-size:15.9px;color:#bbbbbb;letter-spacing:0.023px;">Your version</span>
<span class="t" style="left:845.00px;top:958px;font-size:15.65px;color:#bbbbbb;letter-spacing:0.006px;font-weight:700;">Commit</span>
<span class="t" style="left:989.00px;top:958px;font-size:15.5px;color:#80868c;letter-spacing:-0.100px;">Cancel</span>
<span class="t" style="left:944.60px;top:960px;font-size:19px;color:rgba(222,222,222,0.82);letter-spacing:0.000px;text-shadow:1px 1px 1px rgba(0,0,0,0.45);transform:scaleX(0.9334);transform-origin:0 0;">CSDN @CeaM</span>
<!-- watermark -->
<svg class="abs" id="wechat" style="left:838px;top:919px" width="44" height="40" viewBox="0 0 44 40">
  <path d="M7 24.5L5.900 30L11.500 27.200z" fill="#e8e8e8"/>
  <ellipse cx="15.650" cy="14.700" rx="14.400" ry="13.400" fill="#e8e8e8"/>
  <path d="M35 34.500L39 37L39.600 32z" fill="#e8e8e8"/>
  <ellipse cx="29.600" cy="24.750" rx="12.600" ry="11" fill="#e8e8e8" stroke="#4c4c4c" stroke-width="1.300"/>
  <path d="M35.400 33.600L38.600 36.300L38.900 31.600z" fill="#e8e8e8"/>
  <ellipse cx="10.600" cy="10.400" rx="1.800" ry="2" fill="#2b2b2b"/><ellipse cx="21.800" cy="10.400" rx="1.800" ry="2" fill="#2b2b2b"/>
  <ellipse cx="25.200" cy="20.500" rx="1.700" ry="1.500" fill="#2b2b2b"/><ellipse cx="34.400" cy="20.500" rx="1.700" ry="1.500" fill="#2b2b2b"/>
</svg>
<svg class="abs " style="left:881.60px;top:916.50px;filter:drop-shadow(1px 1px 0.5px rgba(0,0,0,0.4))" width="168.0" height="49.5" viewBox="-6 -32.8 168.0 49.5" fill="#ffffff"><text x="0" y="0" font-size="26" font-weight="500" font-family="'Liberation Sans','Noto Sans CJK SC',sans-serif" fill="#ffffff">卡布奇诺海晨</text></svg>
</body>
</html>
